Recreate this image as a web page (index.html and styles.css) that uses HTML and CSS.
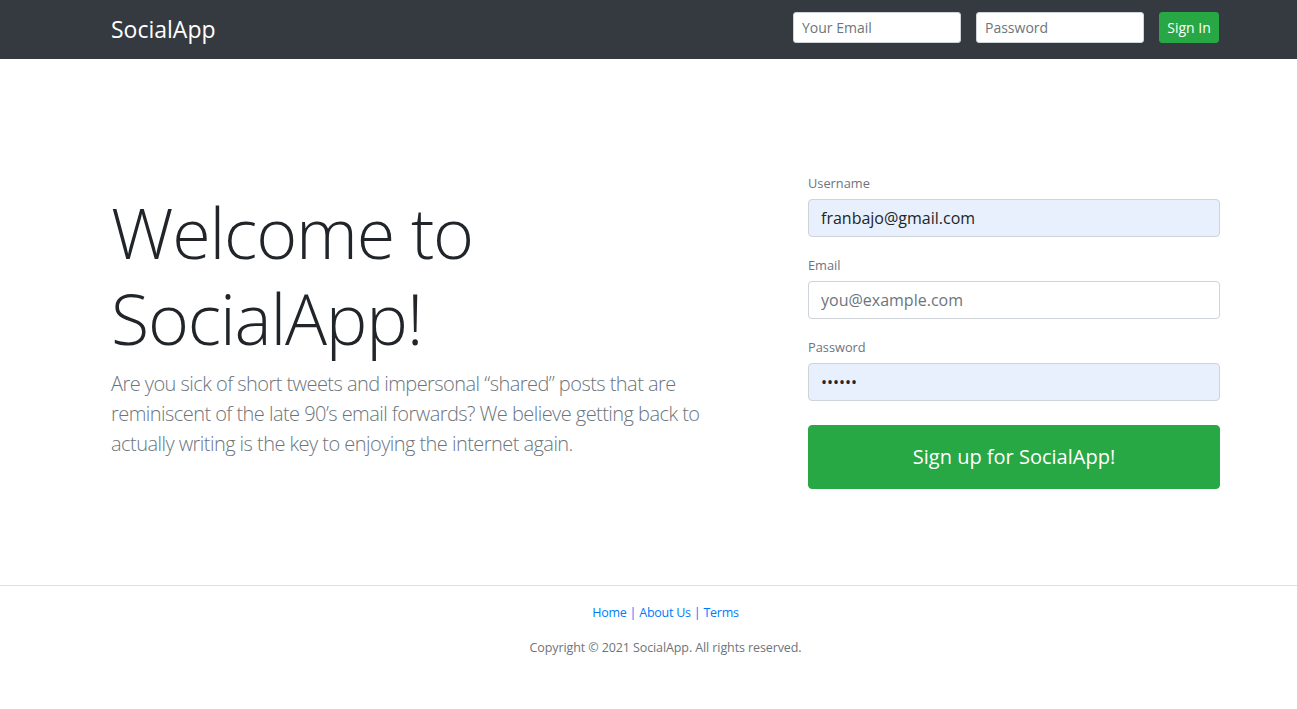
FILE: index.html
```html
<!DOCTYPE html>
<html lang="en">
<head>
<meta charset="utf-8">
<title>SocialApp</title>
<link rel="stylesheet" href="styles.css">
</head>
<body>
<header class="navbar">
  <div class="container nav-inner">
    <a class="brand" href="#">SocialApp</a>
    <form class="signin">
      <input class="input-sm" type="text" placeholder="Your Email">
      <input class="input-sm" type="password" placeholder="Password">
      <button class="btn-sm" type="button">Sign In</button>
    </form>
  </div>
</header>

<main class="main">
  <div class="container row">
    <div class="col-left">
      <h1 class="display">Welcome to SocialApp!</h1>
      <p class="lead">Are you sick of short tweets and impersonal “shared” posts that are reminiscent of the late 90’s email forwards? We believe getting back to actually writing is the key to enjoying the internet again.</p>
    </div>
    <div class="col-right">
      <form class="signup">
        <div class="group">
          <label class="label">Username</label>
          <input class="input autofill" type="text" value="franbajo@gmail.com">
        </div>
        <div class="group">
          <label class="label">Email</label>
          <input class="input" type="text" placeholder="you@example.com">
        </div>
        <div class="group">
          <label class="label">Password</label>
          <input class="input autofill" type="password" value="123456">
        </div>
        <button class="btn-lg" type="button">Sign up for SocialApp!</button>
      </form>
    </div>
  </div>
</main>

<footer class="footer">
  <p class="links"><a href="#">Home</a> | <a href="#">About Us</a> | <a href="#">Terms</a></p>
  <p class="copy">Copyright © 2021 <a href="#" class="plain">SocialApp</a>. All rights reserved.</p>
</footer>
</body>
</html>
```

FILE: styles.css
```css
* { box-sizing: border-box; }
html, body { margin: 0; padding: 0; }
body {
  font-family: "Open Sans", "Noto Sans", "Liberation Sans", sans-serif;
  color: #212529;
  background: #fff;
  font-size: 16px;
  line-height: 1.5;
}
.container {
  width: 1110px;
  margin-left: 111px;
}
.navbar {
  background: #343a40;
  height: 59px;
}
.nav-inner {
  display: flex;
  justify-content: space-between;
  align-items: flex-start;
  padding-top: 12px;
}
.brand {
  color: #fff;
  text-decoration: none;
  font-size: 23px;
  line-height: 31px;
  padding-top: 2px;
}
.signin {
  display: flex;
  gap: 15px;
  margin-right: 2px;
}
.input-sm {
  width: 168px;
  height: 31px;
  padding: 4px 8px;
  font: inherit;
  font-size: 14px;
  line-height: 1.5;
  color: #495057;
  background: #fff;
  border: 1px solid #ced4da;
  border-radius: 3px;
}
.input-sm::placeholder { color: #6c757d; }
.btn-sm {
  width: 60px;
  height: 31px;
  padding: 0;
  white-space: nowrap;
  font: inherit;
  font-size: 14px;
  color: #fff;
  background: #28a745;
  border: 1px solid #28a745;
  border-radius: 3px;
}

.main {
  padding-top: 115px;
  padding-bottom: 96px;
}
.row {
  display: flex;
  align-items: center;
}
.col-left {
  width: 635px;
}
.col-right {
  width: 412px;
  margin-left: 62px;
}
.display {
  font-size: 70px;
  font-weight: 300;
  line-height: 86px;
  letter-spacing: -1.2px;
  margin: 0 0 8px;
  color: #212529;
  width: 500px;
}
.lead {
  font-size: 20px;
  font-weight: 300;
  line-height: 30px;
  letter-spacing: -0.55px;
  color: #6c757d;
  margin: 0 0 16px;
}
.group {
  margin-bottom: 19px;
}
.label {
  display: block;
  font-size: 12.8px;
  line-height: 19px;
  color: #6c757d;
  margin-bottom: 6px;
}
.input {
  display: block;
  width: 100%;
  height: 38px;
  padding: 6px 12px;
  font: inherit;
  font-size: 16px;
  color: #212529;
  background: #fff;
  border: 1px solid #ced4da;
  border-radius: 4px;
}
.input::placeholder { color: #6c757d; }
.autofill { background: #e8f0fe; }
.btn-lg {
  display: block;
  width: 100%;
  height: 64px;
  margin-top: 24px;
  font: inherit;
  font-size: 20px;
  color: #fff;
  background: #28a745;
  border: 1px solid #28a745;
  border-radius: 4px;
}

.footer {
  border-top: 1px solid #dee2e6;
  text-align: center;
  padding-top: 16px;
  padding-left: 34px;
  font-size: 12.5px;
  letter-spacing: -0.1px;
  color: #6c757d;
}
.footer p { margin: 0; }
.links { color: #007bff; margin-bottom: 13px !important; line-height: 22px; letter-spacing: -0.25px; }
.links a { color: #007bff; text-decoration: none; }
.copy { line-height: 22px; }
.plain { color: #6c757d; text-decoration: none; }
```
